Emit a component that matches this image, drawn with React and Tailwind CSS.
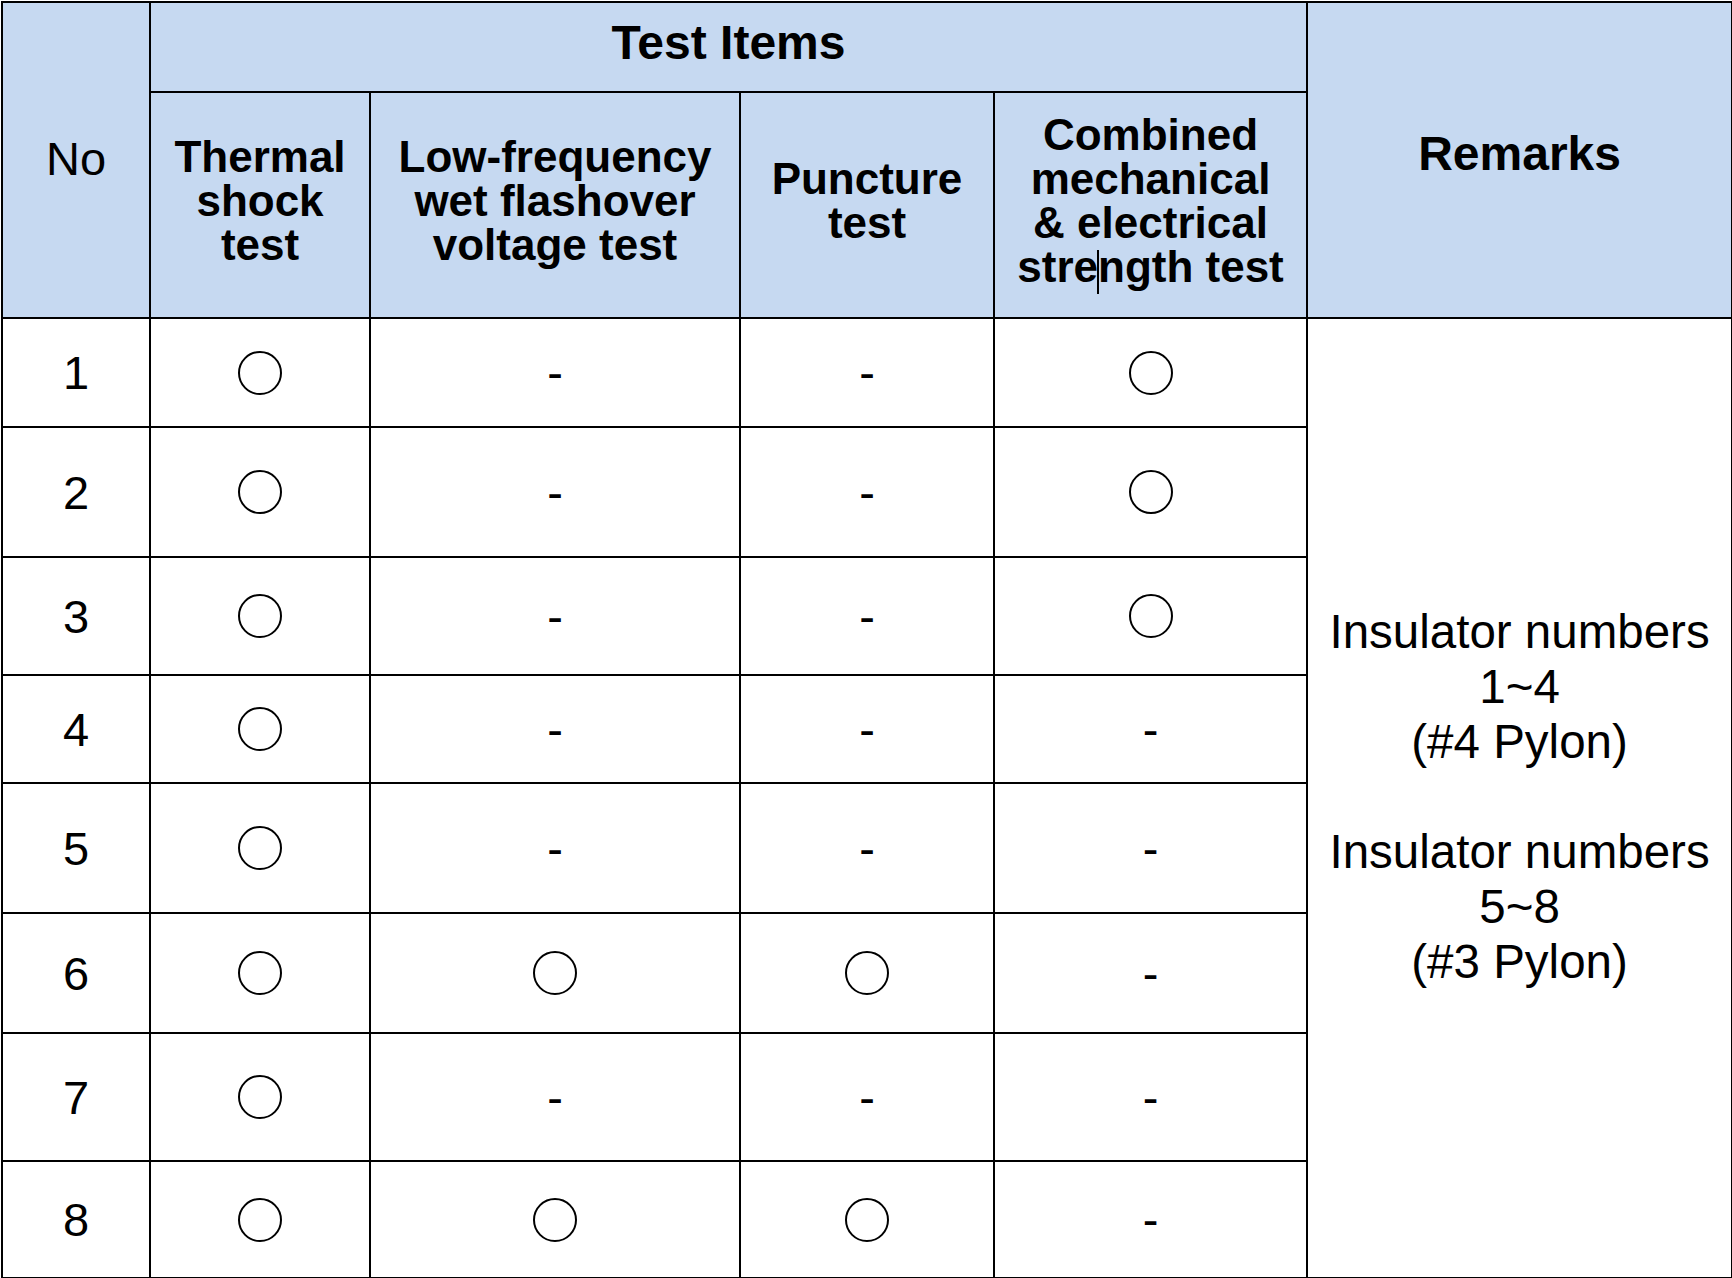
import React from "react";

const Circle = () => (
  <div className="mx-auto h-[44px] w-[44px] rounded-full border-2 border-black" />
);

const Dash = () => <span className="text-[47px] leading-none">-</span>;

const rows = [
  { n: 1, h: "h-[109px]", c: [true, false, false, true] },
  { n: 2, h: "h-[130px]", c: [true, false, false, true] },
  { n: 3, h: "h-[118px]", c: [true, false, false, true] },
  { n: 4, h: "h-[108px]", c: [true, false, false, false] },
  { n: 5, h: "h-[130px]", c: [true, false, false, false] },
  { n: 6, h: "h-[120px]", c: [true, true, true, false] },
  { n: 7, h: "h-[128px]", c: [true, false, false, false] },
  { n: 8, h: "h-[117px]", c: [true, true, true, false] },
];

export default function App() {
  const cell = "border-2 border-black p-0 text-center align-middle";
  const head = `${cell} bg-[#c6d9f1]`;
  return (
    <div className="w-[1732px] h-[1278px] bg-white text-black font-['Liberation_Sans',Arial,sans-serif] pt-px pl-px">
      <table className="w-[1730px] table-fixed border-collapse">
        <colgroup>
          <col className="w-[148px]" />
          <col className="w-[220px]" />
          <col className="w-[370px]" />
          <col className="w-[254px]" />
          <col className="w-[313px]" />
          <col className="w-[425px]" />
        </colgroup>
        <thead>
          <tr className="h-[90px]">
            <th rowSpan={2} className={`${head} font-normal text-[47px] leading-none pb-[4px]`}>
              No
            </th>
            <th colSpan={4} className={`${head} font-bold text-[48px] leading-none pb-[9px]`}>
              Test Items
            </th>
            <th rowSpan={2} className={`${head} font-bold text-[48px] leading-none pb-[12px]`}>
              Remarks
            </th>
          </tr>
          <tr className="h-[226px]">
            <th className={`${head} font-bold text-[44px] leading-[44px] pb-[8px]`}>
              Thermal
              <br />
              shock
              <br />
              test
            </th>
            <th className={`${head} font-bold text-[44px] leading-[44px] pb-[8px]`}>
              Low-frequency
              <br />
              wet flashover
              <br />
              voltage test
            </th>
            <th className={`${head} font-bold text-[44px] leading-[44px] pb-[8px]`}>
              Puncture
              <br />
              test
            </th>
            <th className={`${head} font-bold text-[44px] leading-[44px] pb-[4px]`}>
              Combined
              <br />
              mechanical
              <br />
              &amp; electrical
              <br />
              stre
              <span className="relative inline-block w-0 h-[44px] align-[-12px]">
                <span className="absolute left-[-1px] top-0 h-[44px] w-[1.5px] bg-black" />
              </span>
              ngth test
            </th>
          </tr>
        </thead>
        <tbody>
          {rows.map((r, i) => (
            <tr key={r.n} className={r.h}>
              <td className={`${cell} text-[47px] leading-none`}>{r.n}</td>
              {r.c.map((v, j) => (
                <td key={j} className={cell}>
                  {v ? <Circle /> : <Dash />}
                </td>
              ))}
              {i === 0 && (
                <td rowSpan={8} className={`${cell} text-[47.5px] leading-[55px] pb-[4px]`}>
                  Insulator numbers
                  <br />
                  1~4
                  <br />
                  (#4 Pylon)
                  <br />
                  <br />
                  Insulator numbers
                  <br />
                  5~8
                  <br />
                  (#3 Pylon)
                </td>
              )}
            </tr>
          ))}
        </tbody>
      </table>
    </div>
  );
}
